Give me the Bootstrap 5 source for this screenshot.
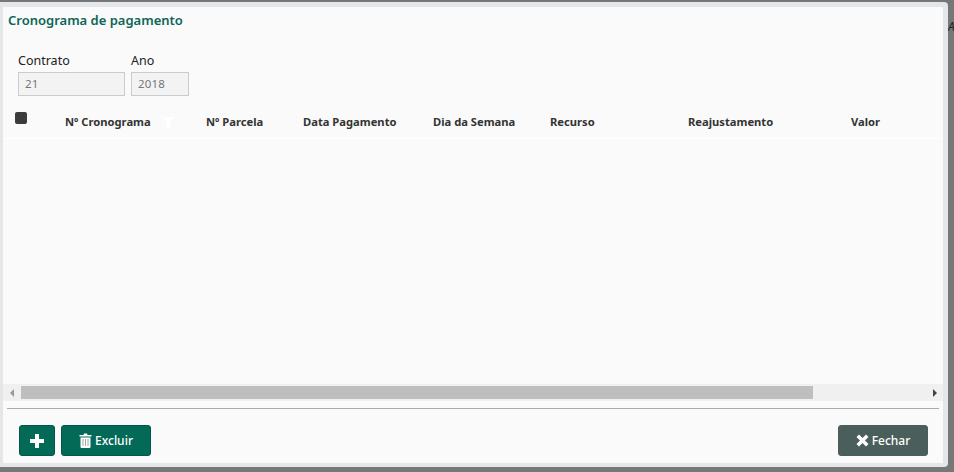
<!DOCTYPE html>
<html lang="pt"><head><meta charset="utf-8">
<link href="https://cdn.jsdelivr.net/npm/bootstrap@5.3.0/dist/css/bootstrap.min.css" rel="stylesheet">
<style>
html,body{height:100%;}
body{background:#777;overflow:hidden;font-family:"Noto Sans",sans-serif;font-size:12px;margin:0;position:relative;}
.backtext{position:absolute;white-space:nowrap;font-size:12px;line-height:14px;color:#1c1c1c;}
.shell{position:relative;margin-top:2px;width:948px;height:465px;background:#e3e7e9;border-radius:0 4px 4px 0;padding:5px 5px 4px 3px;}
.panel{height:100%;background:#fafafa;display:flex;flex-direction:column;}
.ttl{color:#0b6557;font-size:13px;font-weight:600;padding:5px 5px 0;line-height:16px;margin:0;height:46px;}
.fgroup{padding:0 15px;gap:6px;}
.fgroup label{display:block;font-size:12.5px;color:#222;line-height:16px;margin-bottom:3px;}
.fbox{background:#f3f3f3;border:1px solid #ccc;border-radius:0;color:#777;font-size:11.5px;letter-spacing:.2px;padding:0 6px;height:24px;line-height:22px;}
.f1{width:107px;}.f2{width:58px;}
.grid-head{height:37px;margin-top:6px;border-bottom:1px solid #fff;position:relative;font-weight:700;font-size:11.2px;color:#333;flex:none;}
.hcell{position:absolute;top:12px;line-height:16px;white-space:nowrap;}
.chk{position:absolute;left:12px;top:10px;width:12px;height:12px;background:#3c3c3c;border-radius:2px;}
.spacer{flex:1;}
.sbar{height:17px;background:#f0f0f0;display:flex;align-items:center;flex:none;}
.sthumb{margin-left:18px;width:792px;height:13px;background:#bebebe;}
.sgap{flex:1;}
.arrow{width:0;height:0;border-top:4px solid transparent;border-bottom:4px solid transparent;}
.al{border-right:4px solid #999;margin-left:7px;margin-right:-11px;}
.ar{border-left:4px solid #444;margin-right:6px;}
.rule{height:1px;background:#aaa;margin:7px 4px 0;flex:none;border:0;opacity:1;}
.foot{height:54px;padding:16px 15px 0 16px;flex:none;}
.bt{height:31px;border-radius:3px;color:#fff;font-size:12px;font-weight:500;padding:0;display:inline-flex;align-items:center;justify-content:center;gap:3px;}
.bt:hover{color:#fff;}
.bgreen{background:#046a58;border:1px solid #03574a;}
.bgray{background:#4a5f5b;border:1px solid #4a5f5b;}
.wadd{width:36px;}.wdel{width:90px;margin-left:6px;}.wclose{width:90px;}
</style></head>
<body>
<span class="backtext" style="left:492px;top:-11px">Período</span>
<span class="backtext" style="left:581px;top:-11px;color:#3a6a70">01/01/2018</span>
<span class="backtext" style="left:762px;top:-11px">Unidade Gestora</span>
<span class="backtext" style="left:868px;top:-11px;color:#333">Não informado</span>
<span class="backtext" style="left:948px;top:20px;color:#222;font-style:italic">A</span>
<div class="shell">
<div class="panel">
<h1 class="ttl">Cronograma de pagamento</h1>
<div class="d-flex fgroup">
<div><label>Contrato</label><div class="fbox f1">21</div></div>
<div><label>Ano</label><div class="fbox f2">2018</div></div>
</div>
<div class="grid-head">
<span class="chk"></span>
<span class="hcell" style="left:62px">Nº Cronograma</span>
<svg class="hcell" style="left:159px;top:15px" width="13" height="12" viewBox="0 0 13 12"><path d="M0 0H13L8 5V12H5V5Z" fill="#fff"/></svg>
<span class="hcell" style="left:203px">Nº Parcela</span>
<span class="hcell" style="left:300px">Data Pagamento</span>
<span class="hcell" style="left:430px">Dia da Semana</span>
<span class="hcell" style="left:547px">Recurso</span>
<span class="hcell" style="left:685px">Reajustamento</span>
<span class="hcell" style="left:848px">Valor</span>
</div>
<div class="spacer"></div>
<div class="sbar"><span class="arrow al"></span><span class="sthumb"></span><span class="sgap"></span><span class="arrow ar"></span></div>
<hr class="rule">
<div class="foot d-flex">
<button class="btn bt bgreen wadd" aria-label="Adicionar"><svg width="14" height="14" viewBox="0 0 14 14"><path d="M5 0H9V5H14V9H9V14H5V9H0V5H5Z" fill="#fff"/></svg></button>
<button class="btn bt bgreen wdel"><svg width="13" height="15" viewBox="0 0 13 15"><path d="M4.500 2 5 .5H8L8.500 2H12.500V3.500H.5V2ZM1.500 4.500H11.500V14a1 1 0 0 1-1 1H2.500a1 1 0 0 1-1-1Z" fill="#fff"/><path d="M4 6V13M6.500 6V13M9 6V13" stroke="#9aa" stroke-width="1"/></svg>Excluir</button>
<button class="btn bt bgray wclose ms-auto"><svg width="13" height="13" viewBox="0 0 13 13"><path d="M3 .5 6.500 4 10 .5 12.500 3 9 6.500 12.500 10 10 12.500 6.500 9 3 12.500 .5 10 4 6.500 .5 3Z" fill="#fff"/></svg>Fechar</button>
</div>
</div>
</div>
<script src="https://cdn.jsdelivr.net/npm/bootstrap@5.3.0/dist/js/bootstrap.bundle.min.js"></script>
</body></html>
